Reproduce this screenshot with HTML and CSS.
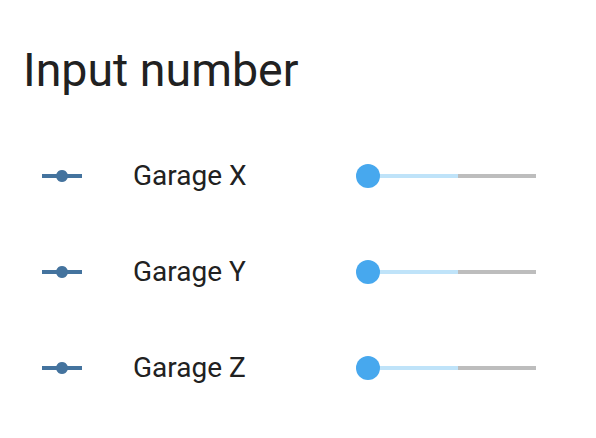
FILE: index.html
```html
<!DOCTYPE html>
<html>
<head>
<meta charset="utf-8">
<link rel="stylesheet" href="styles.css">
</head>
<body>
<div class="card">
  <h1 class="title">Input number</h1>
  <div class="rows">
    <div class="row">
      <svg class="icon" viewBox="0 0 24 24"><path d="M2,11H9.17C9.58,9.83 10.69,9 12,9C13.31,9 14.42,9.83 14.83,11H22V13H14.83C14.42,14.17 13.31,15 12,15C10.69,15 9.58,14.17 9.17,13H2V11Z"/></svg>
      <div class="name">Garage X</div>
      <div class="slider">
        <div class="track"><div class="pre"></div><div class="fill"></div><div class="rest"></div></div>
        <div class="knob"></div>
      </div>
    </div>
    <div class="row">
      <svg class="icon" viewBox="0 0 24 24"><path d="M2,11H9.17C9.58,9.83 10.69,9 12,9C13.31,9 14.42,9.83 14.83,11H22V13H14.83C14.42,14.17 13.31,15 12,15C10.69,15 9.58,14.17 9.17,13H2V11Z"/></svg>
      <div class="name">Garage Y</div>
      <div class="slider">
        <div class="track"><div class="pre"></div><div class="fill"></div><div class="rest"></div></div>
        <div class="knob"></div>
      </div>
    </div>
    <div class="row">
      <svg class="icon" viewBox="0 0 24 24"><path d="M2,11H9.17C9.58,9.83 10.69,9 12,9C13.31,9 14.42,9.83 14.83,11H22V13H14.83C14.42,14.17 13.31,15 12,15C10.69,15 9.58,14.17 9.17,13H2V11Z"/></svg>
      <div class="name">Garage Z</div>
      <div class="slider">
        <div class="track"><div class="pre"></div><div class="fill"></div><div class="rest"></div></div>
        <div class="knob"></div>
      </div>
    </div>
  </div>
</div>
</body>
</html>
```
FILE: styles.css
```css
html, body {
  margin: 0;
  padding: 0;
  background: #ffffff;
}
body {
  font-family: Roboto, "Noto Sans", sans-serif;
  color: #212121;
}
.card {
  padding-top: 38px;
}
.title {
  margin: 0;
  padding-left: 23px;
  font-size: 46.5px;
  font-weight: 400;
  line-height: 64px;
}
.rows {
  margin-top: 34px;
  display: flex;
  flex-direction: column;
  gap: 16px;
}
.row {
  height: 80px;
  display: flex;
  align-items: center;
  padding-left: 38px;
  padding-right: 60px;
}
.icon {
  width: 48px;
  height: 48px;
  fill: #44739e;
  flex: none;
}
.name {
  flex: 1;
  margin-left: 47px;
  font-size: 28px;
  line-height: 40px;
}
.slider {
  position: relative;
  width: 180px;
  height: 24px;
  flex: none;
  display: flex;
  align-items: center;
}
.track {
  width: 100%;
  height: 4px;
  display: flex;
}
.pre {
  width: 12px;
}
.fill {
  width: 90px;
  background: #bfe3f9;
}
.rest {
  flex: 1;
  background: #bdbdbd;
}
.knob {
  position: absolute;
  left: 0;
  top: 0;
  width: 24px;
  height: 24px;
  border-radius: 50%;
  background: #47a8ee;
}
```
